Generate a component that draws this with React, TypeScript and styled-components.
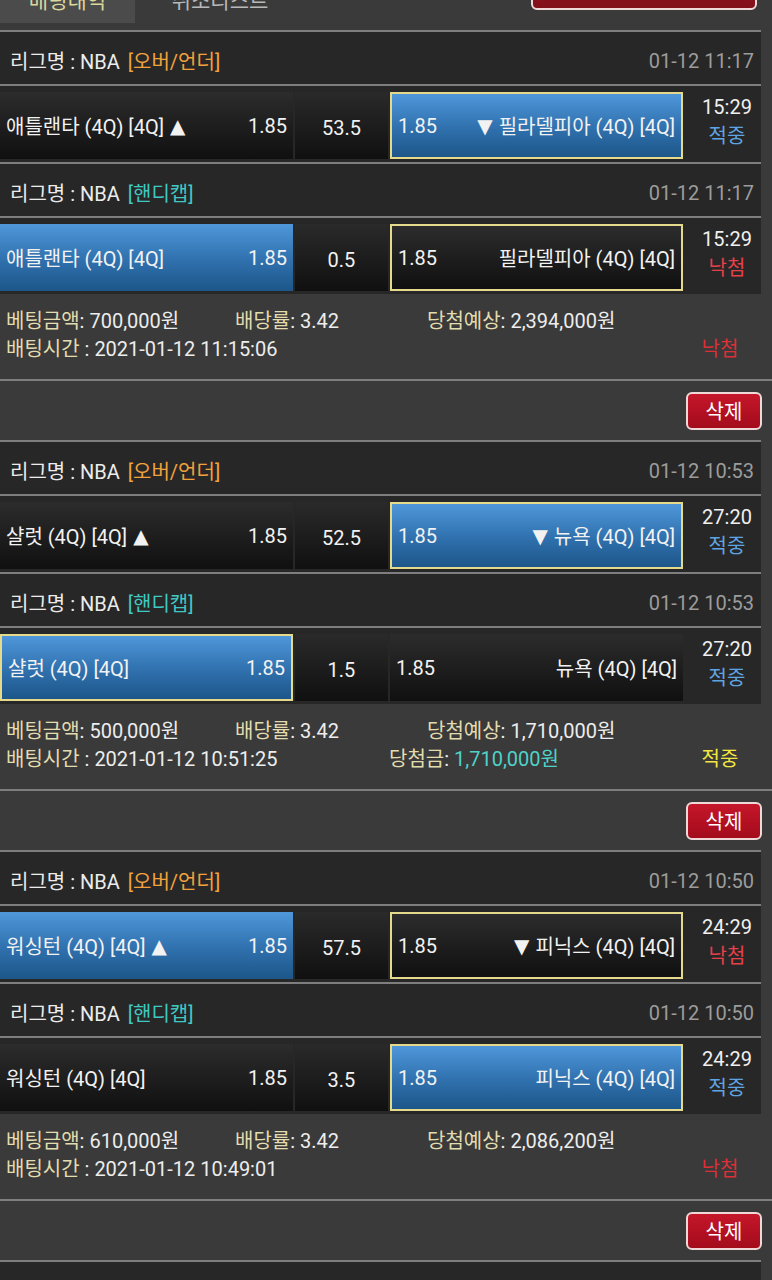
import React from 'react';
import styled, { createGlobalStyle } from 'styled-components';

const GlobalStyle = createGlobalStyle`
  body {
    margin: 0;
    background: #3a3a3a;
    font-family: Roboto, "Noto Sans CJK KR", sans-serif;
    font-size: 20px;
    color: #ededed;
  }
`;

const Page = styled.div`
  width: 772px;
  overflow: hidden;
`;

const TabStrip = styled.div`
  display: flex;
  height: 30px;
`;

const Tab = styled.div<{ $active?: boolean }>`
  width: ${(p) => (p.$active ? '135px' : '170px')};
  height: 23px;
  overflow: hidden;
  background: ${(p) => (p.$active ? '#4b4b4b' : 'transparent')};
  color: ${(p) => (p.$active ? '#dcd79c' : '#b8b8b8')};
  text-align: center;
  font-size: 21px;
`;

const TabLabel = styled.div`
  margin-top: -11px;
  line-height: 24px;
`;

const TopButton = styled.div`
  margin-left: auto;
  margin-right: 15px;
  margin-top: -22px;
  width: 222px;
  height: 28px;
  border: 2px solid #eed8d8;
  border-radius: 6px;
  background: linear-gradient(#9a1020, #80101a);
`;

const Divider = styled.div<{ $full?: boolean }>`
  height: 2px;
  width: ${(p) => (p.$full ? '772px' : '761px')};
  background: #7e7e7e;
`;

const LeagueHeader = styled.div`
  width: 761px;
  height: 52px;
  box-sizing: border-box;
  padding: 5px 7px 0 10px;
  background: #272727;
  display: flex;
  align-items: center;
  justify-content: space-between;
`;

const LeagueName = styled.span`
  color: #ececec;
`;

const MarketTag = styled.span<{ $color: string }>`
  color: ${(p) => p.$color};
  margin-left: 8px;
`;

const Stamp = styled.span`
  color: #9c9c9c;
`;

const MatchRow = styled.div`
  width: 761px;
  height: 76px;
  box-sizing: border-box;
  padding: 6px 0 3px;
  background: #272727;
  display: grid;
  grid-template-columns: 293px 93px 293px 1fr;
  column-gap: 2px;
`;

const Cell = styled.div<{ $blue?: boolean; $picked?: boolean }>`
  box-sizing: border-box;
  display: flex;
  align-items: center;
  justify-content: space-between;
  padding: 0 6px;
  background: ${(p) =>
    p.$blue
      ? 'linear-gradient(#4f97da, #2f70ad 55%, #1d5689)'
      : 'linear-gradient(#2c2c2c, #101010)'};
  border: ${(p) => (p.$picked ? '2px solid #e5d98c' : 'none')};
  color: #f2f2f2;
  white-space: nowrap;
`;

const Arrow = styled.span<{ $side: 'left' | 'right' }>`
  font-family: "DejaVu Sans", sans-serif;
  font-size: 20px;
  position: relative;
  top: -1px;
  ${(p) => (p.$side === 'left' ? 'margin-left: 6px;' : 'margin-right: 6px;')}
`;

const LineCell = styled.div`
  display: flex;
  align-items: center;
  justify-content: center;
  padding-top: 4px;
  background: linear-gradient(#2a2a2a, #101010);
  color: #f2f2f2;
`;

const TimeCol = styled.div`
  display: flex;
  flex-direction: column;
  align-items: center;
  justify-content: center;
  padding: 0 0 8px 8px;
  line-height: 29px;
`;

const Clock = styled.span`
  color: #f0f0f0;
`;

const Result = styled.span<{ $win: boolean }>`
  color: ${(p) => (p.$win ? '#5fa4e2' : '#e5414a')};
`;

const Info = styled.div`
  height: 85px;
  box-sizing: border-box;
  padding: 13px 0 0 6px;
  line-height: 28px;
`;

const InfoRow = styled.div<{ $cols: string }>`
  display: grid;
  grid-template-columns: ${(p) => p.$cols};
  white-space: nowrap;
`;

const Label = styled.span`
  color: #e3dcaf;
`;

const Prize = styled.span`
  color: #4fd2c8;
`;

const Settled = styled.span<{ $win: boolean }>`
  justify-self: center;
  color: ${(p) => (p.$win ? '#f2e640' : '#dd2f36')};
`;

const ButtonBar = styled.div`
  height: 59px;
  display: flex;
  align-items: center;
  justify-content: flex-end;
  padding-right: 10px;
`;

const DeleteButton = styled.button`
  width: 76px;
  height: 38px;
  border: 2px solid #f0d8d8;
  border-radius: 6px;
  background: linear-gradient(#c5162a, #a30c1c);
  color: #fff;
  font-family: inherit;
  font-size: 20px;
  padding: 0;
`;

type Game = {
  market: 'ou' | 'hc';
  stamp: string;
  home: string;
  away: string;
  line: string;
  blue: 'home' | 'away';
  picked: 'home' | 'away';
  clock: string;
  win: boolean;
};

type Slip = {
  games: Game[];
  amount: string;
  due: string;
  time: string;
  prize?: string;
  win: boolean;
};

const slips: Slip[] = [
  {
    games: [
      { market: 'ou', stamp: '01-12 11:17', home: '애틀랜타', away: '필라델피아', line: '53.5', blue: 'away', picked: 'away', clock: '15:29', win: true },
      { market: 'hc', stamp: '01-12 11:17', home: '애틀랜타', away: '필라델피아', line: '0.5', blue: 'home', picked: 'away', clock: '15:29', win: false },
    ],
    amount: '700,000원',
    due: '2,394,000원',
    time: '2021-01-12 11:15:06',
    win: false,
  },
  {
    games: [
      { market: 'ou', stamp: '01-12 10:53', home: '샬럿', away: '뉴욕', line: '52.5', blue: 'away', picked: 'away', clock: '27:20', win: true },
      { market: 'hc', stamp: '01-12 10:53', home: '샬럿', away: '뉴욕', line: '1.5', blue: 'home', picked: 'home', clock: '27:20', win: true },
    ],
    amount: '500,000원',
    due: '1,710,000원',
    time: '2021-01-12 10:51:25',
    prize: '1,710,000원',
    win: true,
  },
  {
    games: [
      { market: 'ou', stamp: '01-12 10:50', home: '워싱턴', away: '피닉스', line: '57.5', blue: 'home', picked: 'away', clock: '24:29', win: false },
      { market: 'hc', stamp: '01-12 10:50', home: '워싱턴', away: '피닉스', line: '3.5', blue: 'away', picked: 'away', clock: '24:29', win: true },
    ],
    amount: '610,000원',
    due: '2,086,200원',
    time: '2021-01-12 10:49:01',
    win: false,
  },
];

const GameRows: React.FC<{ game: Game }> = ({ game }) => {
  const ou = game.market === 'ou';
  return (
    <>
      <LeagueHeader>
        <LeagueName>
          리그명 : NBA
          <MarketTag $color={ou ? '#f2a23c' : '#3fc9c2'}>{ou ? '[오버/언더]' : '[핸디캡]'}</MarketTag>
        </LeagueName>
        <Stamp>{game.stamp}</Stamp>
      </LeagueHeader>
      <Divider />
      <MatchRow>
        <Cell $blue={game.blue === 'home'} $picked={game.picked === 'home'}>
          <span>
            {game.home} (4Q) [4Q]{ou && <Arrow $side="left">▲</Arrow>}
          </span>
          <span>1.85</span>
        </Cell>
        <LineCell>{game.line}</LineCell>
        <Cell $blue={game.blue === 'away'} $picked={game.picked === 'away'}>
          <span>1.85</span>
          <span>
            {ou && <Arrow $side="right">▼</Arrow>}
            {game.away} (4Q) [4Q]
          </span>
        </Cell>
        <TimeCol>
          <Clock>{game.clock}</Clock>
          <Result $win={game.win}>{game.win ? '적중' : '낙첨'}</Result>
        </TimeCol>
      </MatchRow>
    </>
  );
};

const SlipBlock: React.FC<{ slip: Slip }> = ({ slip }) => (
  <>
    <GameRows game={slip.games[0]} />
    <Divider />
    <GameRows game={slip.games[1]} />
    <Info>
      <InfoRow $cols="229px 192px 1fr">
        <span><Label>베팅금액</Label>: {slip.amount}</span>
        <span><Label>배당률</Label>: 3.42</span>
        <span><Label>당첨예상</Label>: {slip.due}</span>
      </InfoRow>
      <InfoRow $cols="383px 292px 78px">
        <span><Label>배팅시간</Label> : {slip.time}</span>
        <span>
          {slip.prize && (
            <>
              <Label>당첨금</Label>: <Prize>{slip.prize}</Prize>
            </>
          )}
        </span>
        <Settled $win={slip.win}>{slip.win ? '적중' : '낙첨'}</Settled>
      </InfoRow>
    </Info>
    <Divider $full />
    <ButtonBar>
      <DeleteButton type="button">삭제</DeleteButton>
    </ButtonBar>
    <Divider />
  </>
);

const App: React.FC = () => (
  <Page>
    <GlobalStyle />
    <TabStrip>
      <Tab $active>
        <TabLabel>배팅내역</TabLabel>
      </Tab>
      <Tab>
        <TabLabel>취소리스트</TabLabel>
      </Tab>
      <TopButton />
    </TabStrip>
    <Divider />
    {slips.map((slip) => (
      <SlipBlock key={slip.time} slip={slip} />
    ))}
    <LeagueHeader />
  </Page>
);

export default App;
